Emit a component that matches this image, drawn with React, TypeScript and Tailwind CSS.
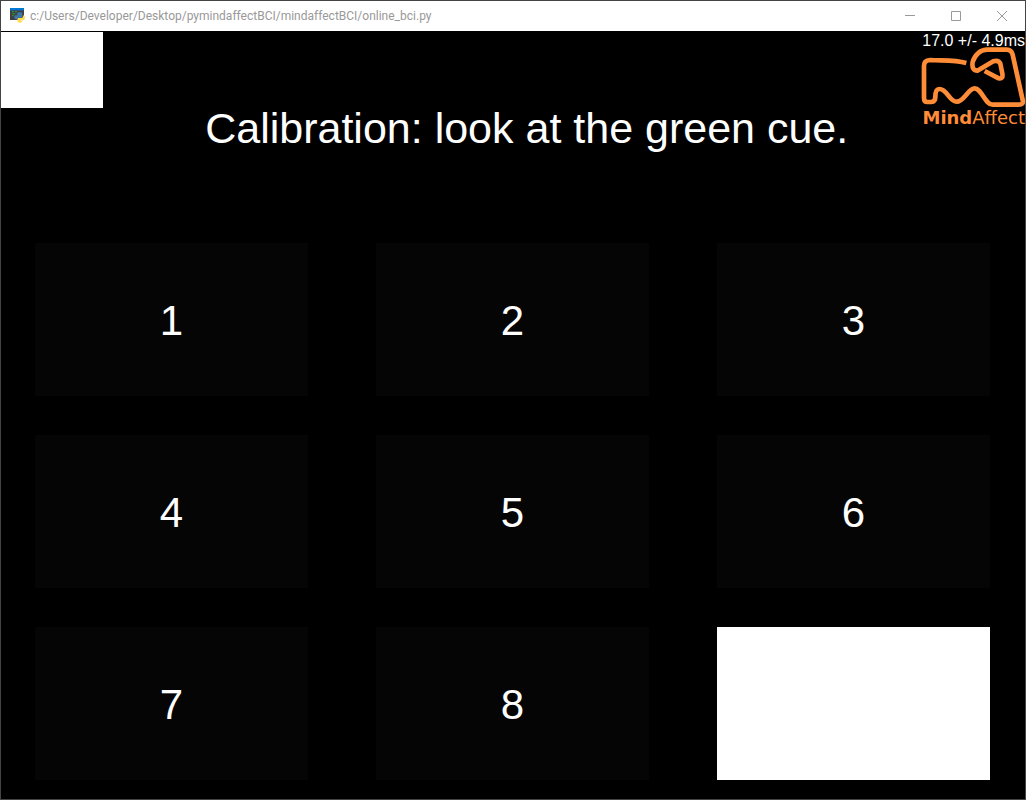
import React from "react";

type Target = { label: string; lit?: boolean };

const targets: Target[] = [
  { label: "1" },
  { label: "2" },
  { label: "3" },
  { label: "4" },
  { label: "5" },
  { label: "6" },
  { label: "7" },
  { label: "8" },
  { label: "9", lit: true },
];

function PythonConsoleIcon() {
  return (
    <svg width="16" height="16" viewBox="0 0 48 48" aria-hidden="true" className="shrink-0">
      <rect x="0" y="0" width="42" height="36" fill="#3f4245" />
      <rect x="0" y="0" width="42" height="7" fill="#0078d4" />
      <path d="M6 11h6M15 11h6M6 17h10M6 23h6" stroke="#2f9e3f" strokeWidth="2.5" />
      <path d="M21 17q0-4 6-4h4q6 0 6 4v8q0 4-4 4h-8q-4 0-4 5h-4q-4 0-4-6t4-6h8v-2h-4z" fill="#3c78aa" />
      <path d="M39 22q6 0 6 8t-6 7h-7v2h5q0 5-7 5t-8-5v-5q0-4 4-4h8q5 0 5-5z" fill="#ffd94f" />
    </svg>
  );
}

function TitleBar() {
  return (
    <header className="flex h-[30px] shrink-0 items-center bg-white pl-[9px]">
      <PythonConsoleIcon />
      <h1 className="ml-1 flex-1 truncate font-['Roboto',sans-serif] text-[12px] leading-4 text-[#999999]">
        c:/Users/Developer/Desktop/pymindaffectBCI/mindaffectBCI/online_bci.py
      </h1>
      <div className="flex h-full text-[#999999]">
        <button type="button" aria-label="Minimize" className="flex w-[46px] items-center justify-center">
          <svg width="10" height="10" viewBox="0 0 10 10" fill="none" stroke="currentColor">
            <path d="M0 4.5h10" />
          </svg>
        </button>
        <button type="button" aria-label="Maximize" className="flex w-[46px] items-center justify-center">
          <svg width="10" height="10" viewBox="0 0 10 10" fill="none" stroke="currentColor">
            <path d="M.5.5h9v9h-9z" />
          </svg>
        </button>
        <button type="button" aria-label="Close" className="flex w-[46px] items-center justify-center">
          <svg width="10" height="10" viewBox="0 0 10 10" fill="none" stroke="currentColor">
            <path d="M0 0l10 10M10 0L0 10" />
          </svg>
        </button>
      </div>
    </header>
  );
}

function MindAffectLogo() {
  return (
    <div className="flex flex-col items-end text-[#ff8c37]">
      <svg
        width="105"
        height="61"
        viewBox="90 143 315 183"
        fill="none"
        stroke="currentColor"
        strokeWidth="14"
        strokeLinejoin="round"
        aria-hidden="true"
        className="overflow-visible"
      >
        <path d="M229 188C195 178 165 181 120 179Q102 180 102 196V292Q102 305 112 305H124Q136 304 136 290Q136 266 148 266C172 266 178 304 200 304C222 304 235 264 254 264C275 264 285 313 308 313H386Q402 313 398 299L368 163Q364 148 350 148H290Q275 149 265 158Q252 170 248 185C245 205 252 211 262 211L310 183Q325 178 331 190L337 220Q340 237 326 234L284 212" />
      </svg>
      <p className="font-['DejaVu_Sans',sans-serif] text-[18px] leading-[18px]">
        <span className="font-bold">Mind</span>Affect
      </p>
    </div>
  );
}

export default function App() {
  return (
    <div className="flex min-h-screen flex-col border border-[#444444] bg-black font-['Liberation_Sans',Arial,sans-serif] text-white">
      <TitleBar />
      <main className="flex flex-1 flex-col pt-px">
        <section className="flex h-[211px] shrink-0 items-start">
          <div className="h-[76px] w-1/10 shrink-0 bg-white" />
          <p className="flex-1 pt-[72px] pl-[30px] text-center text-[43px] leading-[48px] whitespace-nowrap">
            Calibration: look at the green cue.
          </p>
          <div className="shrink-0 text-right">
            <p className="h-4 text-[16px] leading-[18px]">17.0 +/- 4.9ms</p>
            <MindAffectLogo />
          </div>
        </section>
        <section className="grid flex-1 auto-rows-fr grid-cols-3 gap-x-[68px] gap-y-[39px] pr-[35px] pb-[19px] pl-[34px]">
          {targets.map((t) => (
            <div
              key={t.label}
              className={
                t.lit
                  ? "flex items-center justify-center bg-white"
                  : "flex items-center justify-center bg-[#050505] pt-0.5"
              }
            >
              {!t.lit && <span className="text-[42px] leading-[48px]">{t.label}</span>}
            </div>
          ))}
        </section>
      </main>
    </div>
  );
}
